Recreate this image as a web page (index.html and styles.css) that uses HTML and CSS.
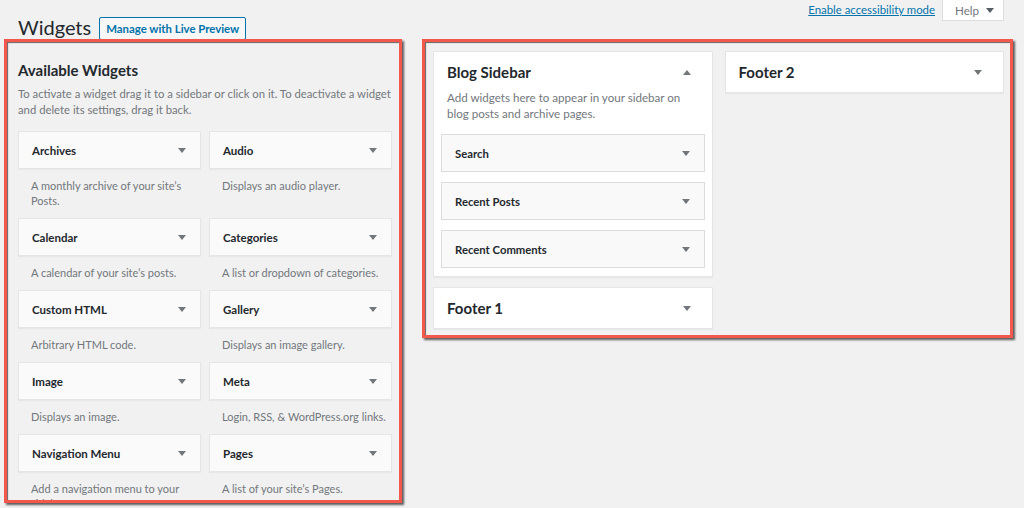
FILE: index.html
```html
<!DOCTYPE html>
<html lang="en">
<head>
<meta charset="utf-8">
<title>Widgets</title>
<link rel="stylesheet" href="styles.css">
</head>
<body>
<header class="top">
  <div class="title-row">
    <h1>Widgets</h1>
    <a class="btn" href="#">Manage with Live Preview</a>
  </div>
  <div class="meta">
    <a class="a11y" href="#">Enable accessibility mode</a>
    <button class="help">Help <i class="arrow"></i></button>
  </div>
</header>
<main class="cols">
  <section class="available hl">
    <h2>Available Widgets</h2>
    <p class="intro">To activate a widget drag it to a sidebar or click on it. To deactivate a widget and delete its settings, drag it back.</p>
    <div class="grid">
      <div class="widget"><div class="wtitle"><span>Archives</span><i class="arrow"></i></div><p class="desc">A monthly archive of your site’s Posts.</p></div>
      <div class="widget"><div class="wtitle"><span>Audio</span><i class="arrow"></i></div><p class="desc">Displays an audio player.</p></div>
      <div class="widget"><div class="wtitle"><span>Calendar</span><i class="arrow"></i></div><p class="desc">A calendar of your site’s posts.</p></div>
      <div class="widget"><div class="wtitle"><span>Categories</span><i class="arrow"></i></div><p class="desc">A list or dropdown of categories.</p></div>
      <div class="widget"><div class="wtitle"><span>Custom HTML</span><i class="arrow"></i></div><p class="desc">Arbitrary HTML code.</p></div>
      <div class="widget"><div class="wtitle"><span>Gallery</span><i class="arrow"></i></div><p class="desc">Displays an image gallery.</p></div>
      <div class="widget"><div class="wtitle"><span>Image</span><i class="arrow"></i></div><p class="desc">Displays an image.</p></div>
      <div class="widget"><div class="wtitle"><span>Meta</span><i class="arrow"></i></div><p class="desc">Login, RSS, &amp; WordPress.org links.</p></div>
      <div class="widget"><div class="wtitle"><span>Navigation Menu</span><i class="arrow"></i></div><p class="desc">Add a navigation menu to your sidebar.</p></div>
      <div class="widget"><div class="wtitle"><span>Pages</span><i class="arrow"></i></div><p class="desc">A list of your site’s Pages.</p></div>
    </div>
  </section>
  <section class="sidebars hl">
    <div class="col">
      <div class="sb">
        <div class="sbhead"><h3>Blog Sidebar</h3><i class="arrow up"></i></div>
        <p class="sbdesc">Add widgets here to appear in your sidebar on blog posts and archive pages.</p>
        <div class="sbw"><span>Search</span><i class="arrow"></i></div>
        <div class="sbw"><span>Recent Posts</span><i class="arrow"></i></div>
        <div class="sbw"><span>Recent Comments</span><i class="arrow"></i></div>
      </div>
      <div class="sb">
        <div class="sbhead"><h3>Footer 1</h3><i class="arrow"></i></div>
      </div>
    </div>
    <div class="col">
      <div class="sb">
        <div class="sbhead"><h3>Footer 2</h3><i class="arrow"></i></div>
      </div>
    </div>
  </section>
</main>
</body>
</html>
```
FILE: styles.css
```css
* { box-sizing: border-box; }
html, body { margin: 0; padding: 0; }
body {
  width: 1024px;
  height: 508px;
  overflow: hidden;
  background: #f1f1f1;
  font-family: Lato, "Open Sans", sans-serif;
  font-size: 11.6px;
  color: #23282d;
}
.top {
  height: 39px;
  display: flex;
  justify-content: space-between;
  align-items: flex-start;
}
.title-row {
  display: flex;
  align-items: center;
  gap: 8px;
  padding: 13px 0 0 18px;
}
h1 {
  margin: 0;
  font-size: 20px;
  line-height: 29px;
  font-weight: 400;
  color: #23282d;
}
.btn {
  display: inline-block;
  width: 147px;
  height: 23px;
  line-height: 21px;
  text-align: center;
  border: 1px solid #0073aa;
  border-radius: 2px;
  background: #f7f7f7;
  color: #0073aa;
  font-size: 11.4px;
  font-weight: 700;
  text-decoration: none;
  margin-top: 1px;
}
.meta {
  display: flex;
  align-items: flex-start;
  gap: 7px;
  padding-right: 20px;
}
.a11y {
  color: #0073aa;
  font-size: 11.4px;
  line-height: 16px;
  margin-top: 2px;
  text-decoration: underline;
}
.help {
  width: 62px;
  height: 21px;
  padding: 0 0 0 3px;
  border: 1px solid #ddd;
  border-top: 0;
  background: #fff;
  color: #72777c;
  font-family: inherit;
  font-size: 11.6px;
  display: flex;
  align-items: center;
  justify-content: center;
  gap: 7px;
}
.arrow {
  display: inline-block;
  width: 0;
  height: 0;
  border-left: 4px solid transparent;
  border-right: 4px solid transparent;
  border-top: 5px solid #72777c;
  flex: none;
}
.arrow.up {
  border-top: 0;
  border-bottom: 5px solid #72777c;
}
.help .arrow { border-top-color: #555d66; }

.cols {
  display: flex;
  align-items: flex-start;
  gap: 20px;
  padding-left: 4px;
}
.hl {
  border: 3px solid #f4574b;
  box-shadow: 2px 2px 2px rgba(40, 40, 40, .75), inset 1px 1px 1px rgba(40, 40, 40, .7);
}
.available {
  width: 398px;
  height: 464px;
  overflow: hidden;
  padding: 18px 7px 0 11px;
}
h2 {
  margin: 0 0 6px;
  font-size: 15px;
  line-height: 20px;
  font-weight: 700;
}
.intro {
  margin: 0 0 13px;
  font-size: 11.3px;
  line-height: 16px;
  color: #72777c;
}
.grid {
  display: grid;
  grid-template-columns: 1fr 1fr;
  column-gap: 8px;
}
.wtitle {
  height: 38px;
  display: flex;
  align-items: center;
  justify-content: space-between;
  padding: 0 14px 0 13px;
  background: #fafafa;
  border: 1px solid #e5e5e5;
  box-shadow: 0 1px 1px rgba(0, 0, 0, .04);
  font-size: 11.5px;
  font-weight: 700;
}
.desc {
  margin: 0;
  padding: 9px 0 10px 13px;
  font-size: 11px;
  line-height: 15px;
  color: #72777c;
}

.sidebars {
  width: 591px;
  padding: 9px 6px 6px 8px;
  display: grid;
  grid-template-columns: 1fr 1fr;
  column-gap: 12px;
}
.col { display: flex; flex-direction: column; gap: 10px; }
.sb {
  background: #fff;
  border: 1px solid #e5e5e5;
  box-shadow: 0 1px 1px rgba(0, 0, 0, .04);
}
.sbhead {
  height: 40px;
  display: flex;
  align-items: center;
  justify-content: space-between;
  padding: 0 21px 0 13px;
}
h3 {
  margin: 0;
  font-size: 15px;
  font-weight: 700;
}
.sbdesc {
  margin: -2px 0 12px;
  padding: 0 13px;
  line-height: 16px;
  color: #72777c;
}
.sbw {
  height: 38px;
  margin: 0 7px 10px;
  display: flex;
  align-items: center;
  justify-content: space-between;
  padding: 0 14px 0 13px;
  background: #f9f9f9;
  border: 1px solid #dcdcde;
  font-size: 11.3px;
  font-weight: 700;
}
.sbw:last-child { margin-bottom: 8px; }
```
